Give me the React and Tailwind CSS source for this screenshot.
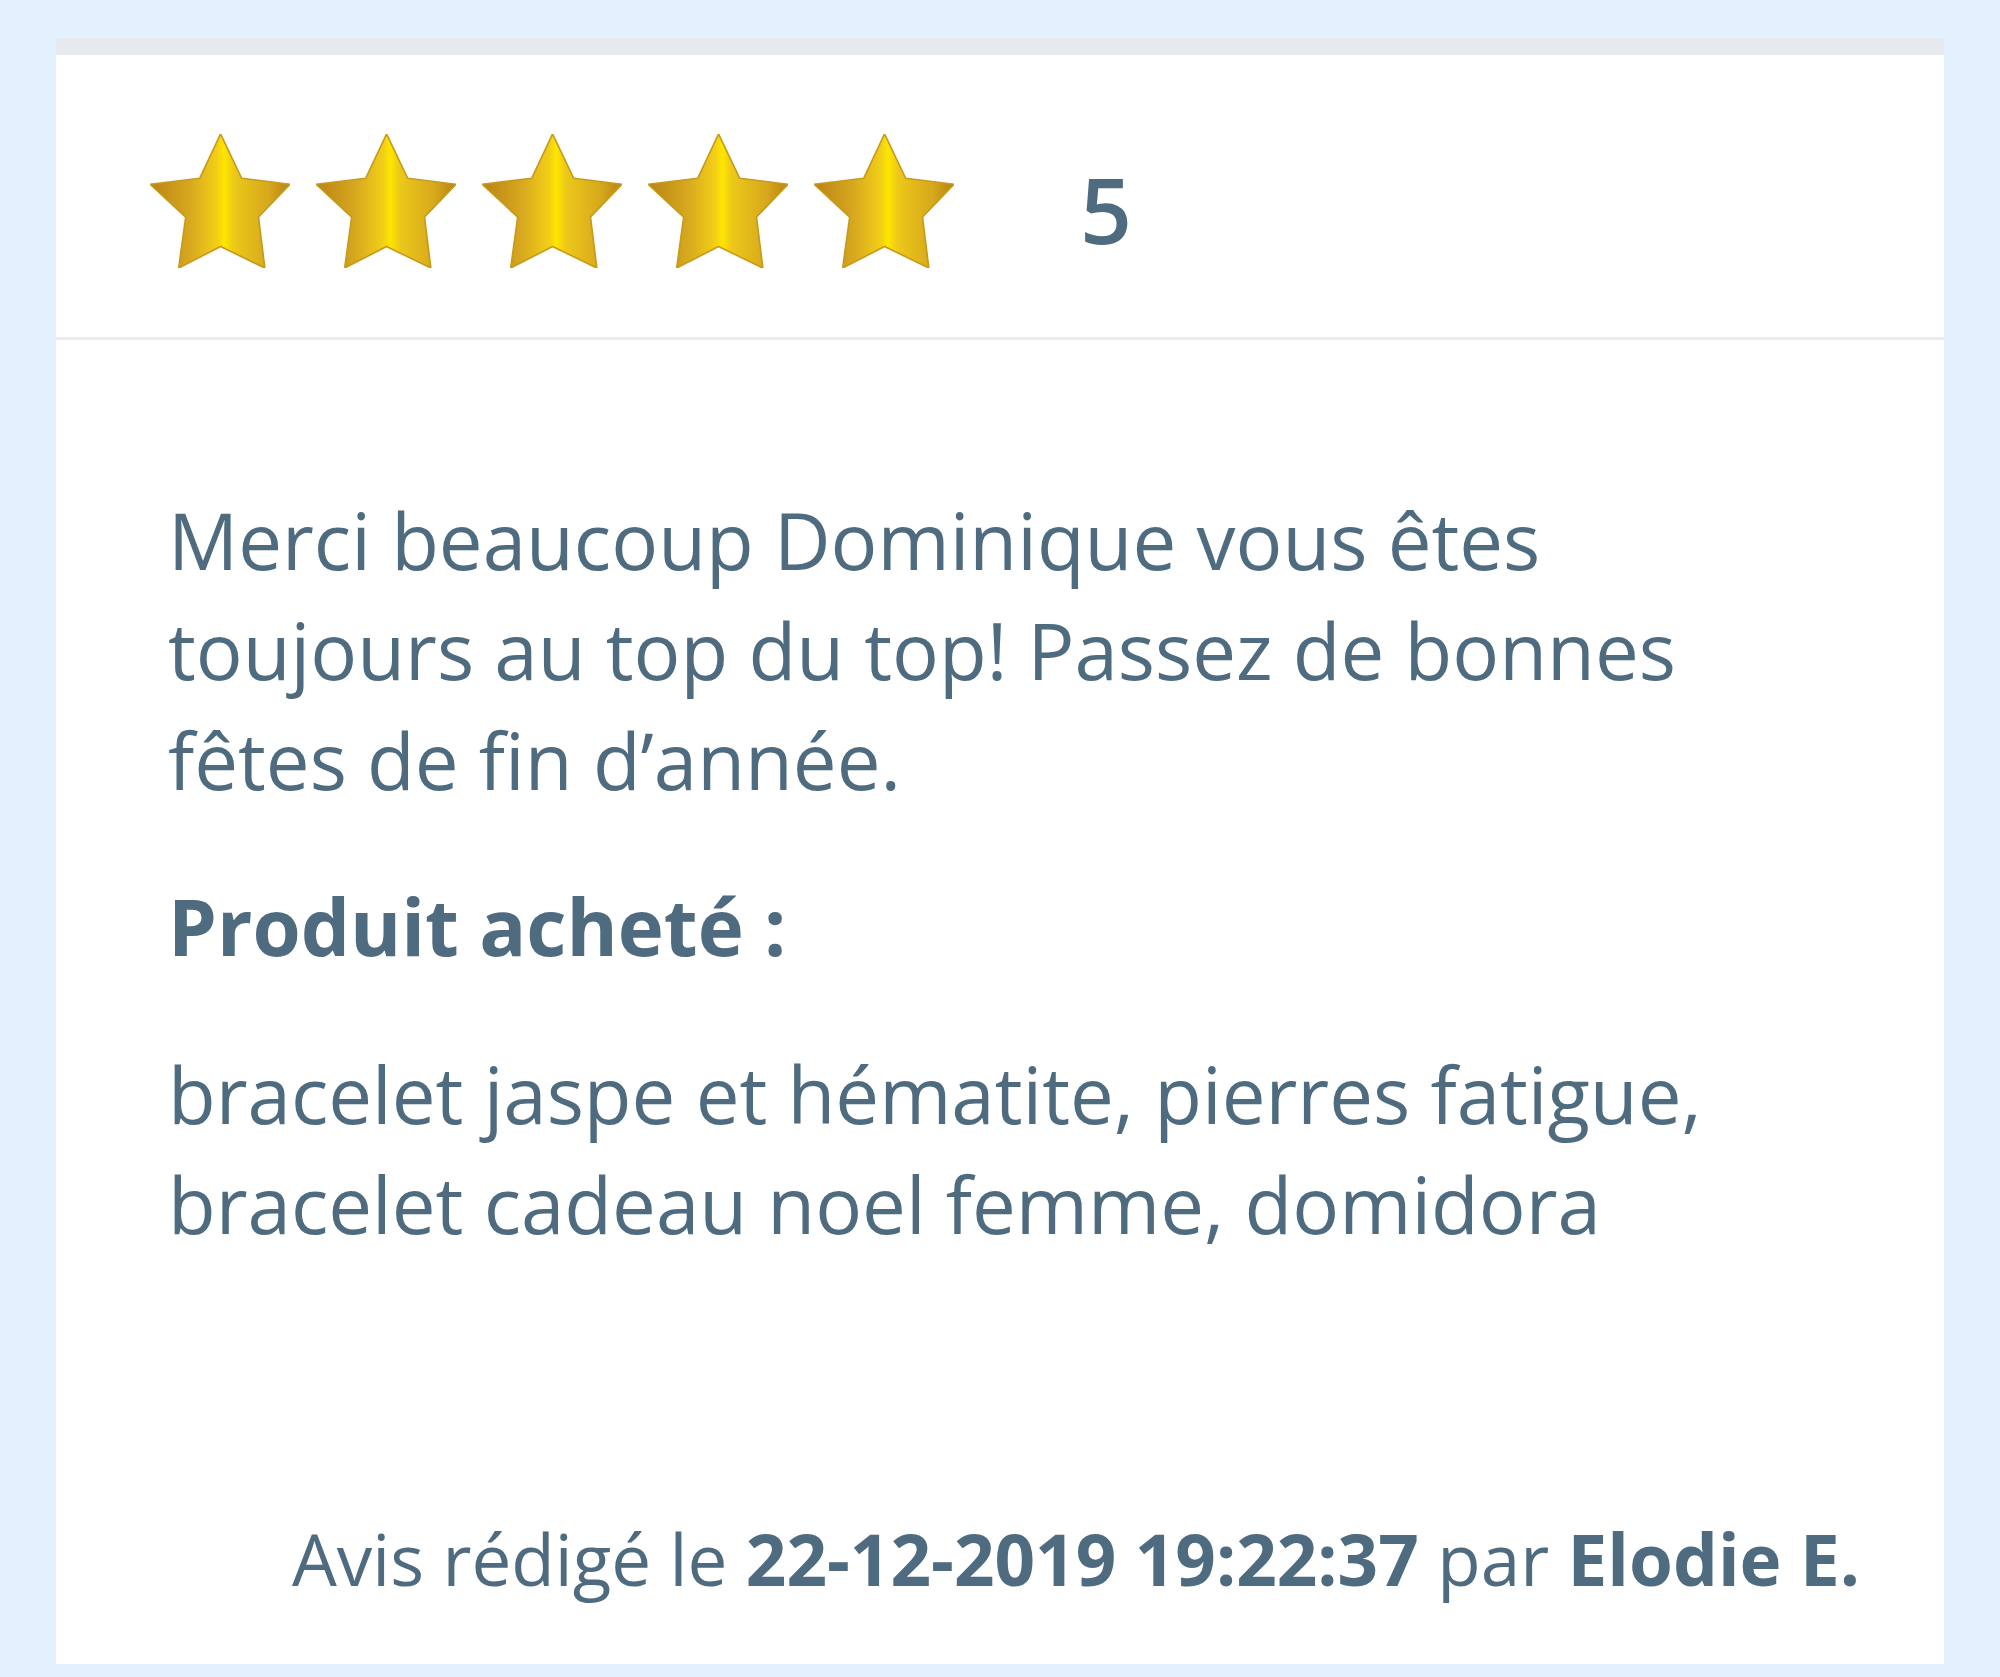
import React from "react";

const Star = ({ id }) => (
  <svg width="140" height="134" viewBox="0 0 100 100" preserveAspectRatio="none">
    <defs>
      <linearGradient id={id} x1="0" y1="0" x2="1" y2="0">
        <stop offset="0" stopColor="#b98215" />
        <stop offset="0.3" stopColor="#d9ab1f" />
        <stop offset="0.48" stopColor="#f2cf16" />
        <stop offset="0.53" stopColor="#ffe600" />
        <stop offset="0.6" stopColor="#ecc81a" />
        <stop offset="0.85" stopColor="#d6a81c" />
        <stop offset="1" stopColor="#b98215" />
      </linearGradient>
    </defs>
    <polygon
      points="50.4,0 65.5,33 100,37.5 77.5,62 82,100 50.4,84 20.5,100 25.5,62 0,37.5 35.5,33"
      fill={`url(#${id})`}
      stroke="#c79a1c"
      strokeWidth="1.2"
      strokeLinejoin="round"
    />
  </svg>
);

export default function App() {
  const stars = [1, 2, 3, 4, 5];

  return (
    <div className="min-h-[1677px] w-full bg-[#e3f0fd] px-[56px] pt-[38px] pb-[13px] font-['Open_Sans',sans-serif] text-[#4e6b7f]">
      <div className="flex min-h-[1626px] flex-col border-t-[17px] border-[#e6eaee] bg-white">
        {/* note */}
        <div className="flex h-[285px] items-center border-b-[3px] border-[#e8ebef] pl-[94px]">
          <div className="mt-[10px] flex gap-[26px]">
            {stars.map((s) => (
              <Star key={s} id={`gold-${s}`} />
            ))}
          </div>
          <span className="mt-[26px] ml-[126px] text-[91px] leading-none font-semibold">5</span>
        </div>

        {/* avis */}
        <div className="flex flex-1 flex-col pl-[112px] pr-[84px] pt-[145px] pb-[50px]">
          <p className="max-w-[1570px] text-[78px] leading-[110px]">
            Merci beaucoup Dominique vous êtes toujours au top du top! Passez de bonnes fêtes de fin d’année.
          </p>
          <p className="mt-[56px] text-[78px] leading-[110px] font-bold">Produit acheté :</p>
          <p className="mt-[58px] max-w-[1570px] text-[78px] leading-[110px]">
            bracelet jaspe et hématite, pierres fatigue, bracelet cadeau noel femme, domidora
          </p>
          <p className="mt-auto text-right text-[71px] leading-[110px]">
            Avis rédigé le <span className="font-bold">22-12-2019 19:22:37</span> par{" "}
            <span className="font-bold">Elodie E.</span>
          </p>
        </div>
      </div>
    </div>
  );
}
